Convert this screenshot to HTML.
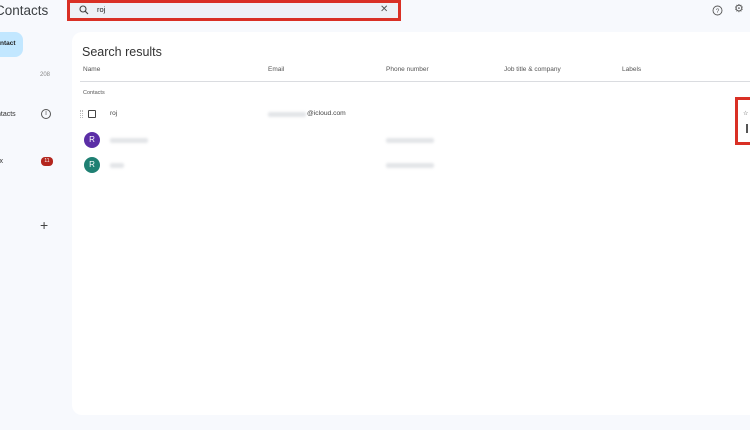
<!DOCTYPE html>
<html><head><meta charset="utf-8"><style>
*{margin:0;padding:0;box-sizing:border-box}
body{width:750px;height:430px;overflow:hidden;background:#f7f9fd;font-family:"Liberation Sans",sans-serif;position:relative;color:#1f1f1f}
.abs{position:absolute;line-height:1}
.blur{position:absolute;height:5px;background:#e3e5e8;border-radius:2px;filter:blur(1.2px)}
</style></head><body>
<div class="abs" style="left:-5px;top:4px;font-size:13.5px;color:#3c4043">Contacts</div>
<div class="abs" style="left:-20px;top:32px;width:43px;height:25px;background:#c2e7ff;border-radius:8px;"></div>
<div class="abs" style="left:0;top:41px;font-size:6.5px;font-weight:bold;color:#1f1f1f">ntact</div>
<div class="abs" style="left:40px;top:72px;font-size:6px;color:#888">208</div>
<div class="abs" style="left:-3px;top:111px;font-size:7px;color:#333">ntacts</div>
<div class="abs" style="left:41px;top:109px;width:10px;height:10px;border:1px solid #555;border-radius:50%;font-size:7px;text-align:center;line-height:8px;color:#555">i</div>
<div class="abs" style="left:-2px;top:158px;font-size:7px;color:#333">ix</div>
<div class="abs" style="left:41px;top:157px;width:12px;height:9px;background:#b3261e;border-radius:4px;font-size:5px;color:#fff;text-align:center;line-height:9px">11</div>
<div class="abs" style="left:40px;top:218px;font-size:14px;color:#444">+</div>

<div class="abs" style="left:67px;top:0;width:334px;height:21px;border:3px solid #d93025;background:#eef1f6"></div>
<svg class="abs" style="left:79px;top:5px" width="10" height="10" viewBox="0 0 10 10"><circle cx="4" cy="4" r="3" fill="none" stroke="#444" stroke-width="1.1"/><line x1="6.2" y1="6.2" x2="9" y2="9" stroke="#444" stroke-width="1.2"/></svg>
<div class="abs" style="left:97px;top:6px;font-size:7.5px;color:#222">roj</div>
<div class="abs" style="left:380px;top:5px;font-size:10px;color:#555">✕</div>
<svg class="abs" style="left:712px;top:5px" width="11" height="11" viewBox="0 0 11 11"><circle cx="5.5" cy="5.5" r="4.5" fill="none" stroke="#555" stroke-width="0.9"/><text x="5.5" y="8" font-size="6.5" text-anchor="middle" fill="#555" font-family="Liberation Sans">?</text></svg>
<div class="abs" style="left:734px;top:4px;font-size:11px;color:#555">⚙</div>

<div class="abs" style="left:72px;top:32px;width:690px;height:383px;background:#fff;border-radius:10px"></div>
<div class="abs" style="left:82px;top:46px;font-size:12.5px;color:#333">Search results</div>
<div class="abs" style="left:83px;top:67px;font-size:6.5px;color:#555">Name</div>
<div class="abs" style="left:268px;top:67px;font-size:6.5px;color:#555">Email</div>
<div class="abs" style="left:386px;top:67px;font-size:6.5px;color:#555">Phone number</div>
<div class="abs" style="left:504px;top:67px;font-size:6.5px;color:#555">Job title &amp; company</div>
<div class="abs" style="left:622px;top:67px;font-size:6.5px;color:#555">Labels</div>
<div class="abs" style="left:80px;top:81px;width:670px;height:1px;background:#dadce0"></div>
<div class="abs" style="left:83px;top:91px;font-size:5.5px;color:#555">Contacts</div>

<div class="abs" style="left:80px;top:110px;width:3px;height:8px;border-left:1px dotted #bbb;border-right:1px dotted #bbb"></div>
<div class="abs" style="left:88px;top:110px;width:8px;height:8px;border:1px solid #444;border-radius:1px"></div>
<div class="abs" style="left:110px;top:111px;font-size:6.5px;color:#444">roj</div>
<div class="blur" style="left:268px;top:112px;width:38px"></div>
<div class="abs" style="left:307px;top:111px;font-size:6.7px;color:#444">@icloud.com</div>

<div class="abs" style="left:84px;top:132px;width:16px;height:16px;border-radius:50%;background:#5b2ea6;color:#fff;font-size:8px;text-align:center;line-height:16px">R</div>
<div class="blur" style="left:110px;top:138px;width:38px"></div>
<div class="blur" style="left:386px;top:138px;width:48px"></div>
<div class="abs" style="left:84px;top:157px;width:16px;height:16px;border-radius:50%;background:#1f8073;color:#fff;font-size:8px;text-align:center;line-height:16px">R</div>
<div class="blur" style="left:110px;top:163px;width:14px"></div>
<div class="blur" style="left:386px;top:163px;width:48px"></div>

<div class="abs" style="left:735px;top:97px;width:20px;height:48px;border:3px solid #d93025"></div>
<div class="abs" style="left:743px;top:111px;font-size:6px;color:#555">☆</div>
<div class="abs" style="left:746px;top:124px;width:2px;height:9px;background:#555"></div>
</body></html>
